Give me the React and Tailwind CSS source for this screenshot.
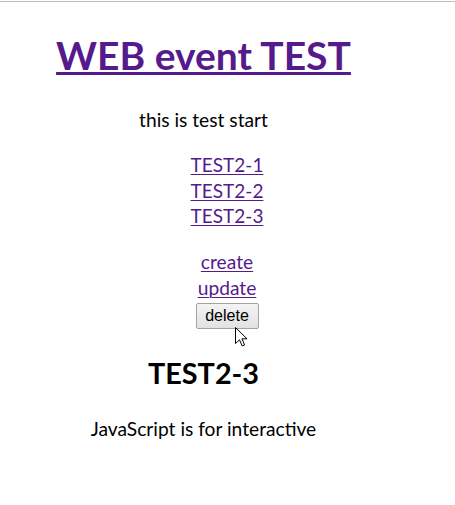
export default function App() {
  return (
    <div className="relative min-h-[505px] bg-white text-black" style={{ fontFamily: 'Lato, "Noto Sans", sans-serif' }}>
      <div className="h-px"></div>
      <div className="h-px bg-[#bdbdbd]"></div>
      <div className="w-[407px] text-center">
        <h1 className="mt-[31px] text-[39px] font-bold leading-[44px]">
          <a href="#" className="text-[#551a8b] underline decoration-[3px] underline-offset-[2px]">WEB event TEST</a>
        </h1>
        <p className="mt-[30px] text-[19.2px] leading-[26px]">this is test start</p>
        <ul className="mt-[19px] pl-[47px] text-[19px] leading-[25.6px]">
          <li><a href="#" className="text-[#551a8b] underline decoration-1 underline-offset-[2px]">TEST2-1</a></li>
          <li><a href="#" className="text-[#551a8b] underline decoration-1 underline-offset-[2px]">TEST2-2</a></li>
          <li><a href="#" className="text-[#551a8b] underline decoration-1 underline-offset-[2px]">TEST2-3</a></li>
        </ul>
        <div className="mt-[20.5px] pl-[47px] text-[19.2px] leading-[25.6px]">
          <div><a href="#" className="text-[#551a8b] underline decoration-1 underline-offset-[2px]">create</a></div>
          <div><a href="#" className="text-[#551a8b] underline decoration-1 underline-offset-[2px]">update</a></div>
          <div className="mt-[3px] flex justify-center">
            <button
              className="h-[26px] w-[63px] rounded-[2px] border border-[#a3a3a3] bg-gradient-to-b from-[#f4f4f4] to-[#e2e2e2] text-[16px] leading-[18px] text-black"
              style={{ fontFamily: '"Liberation Sans", Arial, sans-serif' }}
            >
              delete
            </button>
          </div>
        </div>
        <h2 className="mt-[27px] text-[28.8px] font-bold leading-[34px]">TEST2-3</h2>
        <p className="mt-[25.6px] text-[19.2px] leading-[26px]">JavaScript is for interactive</p>
      </div>
      <svg className="absolute left-[235px] top-[327px]" width="13" height="20" viewBox="0 0 13 20">
        <path d="M0.5 0.5 L0.5 16.5 L4.5 12.8 L7.2 19 L9.6 18 L7 11.8 L12 11.8 Z" fill="#fff" stroke="#000" strokeWidth="1" strokeLinejoin="miter" />
      </svg>
    </div>
  );
}
